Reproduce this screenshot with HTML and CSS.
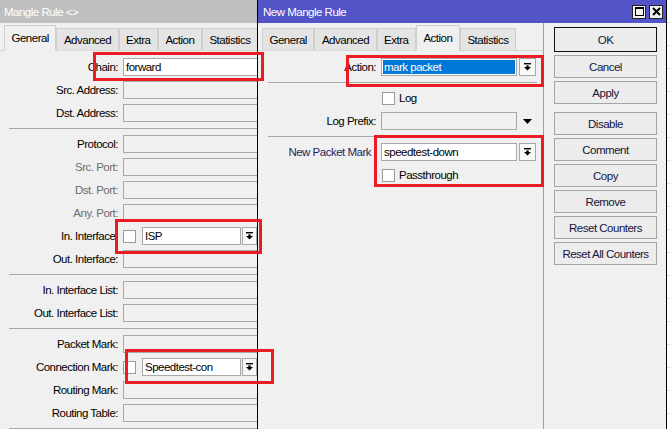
FILE: index.html
```html
<!DOCTYPE html>
<html>
<head>
<meta charset="utf-8">
<title>Mangle Rule</title>
<link rel="stylesheet" href="styles.css">
</head>
<body>
<div class="desktop">

  <section class="win win-back">
    <header class="titlebar inactive"><span class="title-text">Mangle Rule &lt;&gt;</span></header>
    <nav class="tabs">
      <span class="tab active">General</span>
      <span class="tab">Advanced</span>
      <span class="tab">Extra</span>
      <span class="tab">Action</span>
      <span class="tab">Statistics</span>
    </nav>
    <div class="panel">
      <div class="form form-back">
        <span class="lbl">Chain:</span><div class="input white">forward</div>
        <span class="lbl">Src. Address:</span><div class="input"></div>
        <span class="lbl">Dst. Address:</span><div class="input"></div>
        <div class="sep"></div>
        <span class="lbl">Protocol:</span><div class="input"></div>
        <span class="lbl dim">Src. Port:</span><div class="input"></div>
        <span class="lbl dim">Dst. Port:</span><div class="input"></div>
        <span class="lbl dim">Any. Port:</span><div class="input"></div>
        <span class="lbl">In. Interface:</span>
        <div class="combo">
          <span class="chk"></span>
          <div class="input white narrow">ISP</div>
          <span class="dd"><svg width="7" height="8" viewBox="0 0 7 8"><rect x="0" y="0" width="7" height="1.4"/><rect x="2.3" y="2.4" width="2.4" height="1.6"/><path d="M0 4h7L3.5 7.6z"/></svg></span>
        </div>
        <span class="lbl">Out. Interface:</span><div class="input"></div>
        <div class="sep"></div>
        <span class="lbl">In. Interface List:</span><div class="input"></div>
        <span class="lbl">Out. Interface List:</span><div class="input"></div>
        <div class="sep"></div>
        <span class="lbl">Packet Mark:</span><div class="input"></div>
        <span class="lbl">Connection Mark:</span>
        <div class="combo">
          <span class="chk"></span>
          <div class="input white narrow">Speedtest-con</div>
          <span class="dd"><svg width="7" height="8" viewBox="0 0 7 8"><rect x="0" y="0" width="7" height="1.4"/><rect x="2.3" y="2.4" width="2.4" height="1.6"/><path d="M0 4h7L3.5 7.6z"/></svg></span>
        </div>
        <span class="lbl">Routing Mark:</span><div class="input"></div>
        <span class="lbl">Routing Table:</span><div class="input"></div>
        <div class="sep"></div>
      </div>
    </div>
  </section>

  <section class="win win-front">
    <header class="titlebar active">
      <span class="title-text">New Mangle Rule</span>
      <span class="tbtn"><svg width="9" height="9" viewBox="0 0 9 9"><rect x="0.5" y="0.5" width="8" height="8" fill="none" stroke="#000"/><rect x="0" y="0" width="9" height="2"/></svg></span>
      <span class="tbtn"><svg width="9" height="9" viewBox="0 0 9 9"><path d="M1 1L8 8M8 1L1 8" stroke="#000" stroke-width="2"/></svg></span>
    </header>
    <div class="body">
      <div class="main">
        <nav class="tabs">
          <span class="tab">General</span>
          <span class="tab">Advanced</span>
          <span class="tab">Extra</span>
          <span class="tab active">Action</span>
          <span class="tab">Statistics</span>
        </nav>
        <div class="panel">
          <div class="form form-front">
            <span class="lbl">Action:</span>
            <div class="combo">
              <div class="input white sel wide">mark packet</div>
              <span class="dd dd-r"><svg width="7" height="8" viewBox="0 0 7 8"><rect x="0" y="0" width="7" height="1.4"/><rect x="2.3" y="2.4" width="2.4" height="1.6"/><path d="M0 4h7L3.5 7.6z"/></svg></span>
            </div>
            <div class="sep"></div>
            <span class="lbl"></span>
            <div class="check-row"><span class="chk"></span><span>Log</span></div>
            <span class="lbl">Log Prefix:</span>
            <div class="combo">
              <div class="input wide"></div>
              <span class="tri"><svg width="9" height="5" viewBox="0 0 9 5"><path d="M0 0h9L4.5 5z"/></svg></span>
            </div>
            <div class="sep"></div>
            <span class="lbl navy">New Packet Mark</span>
            <div class="combo">
              <div class="input white wide">speedtest-down</div>
              <span class="dd dd-r"><svg width="7" height="8" viewBox="0 0 7 8"><rect x="0" y="0" width="7" height="1.4"/><rect x="2.3" y="2.4" width="2.4" height="1.6"/><path d="M0 4h7L3.5 7.6z"/></svg></span>
            </div>
            <span class="lbl"></span>
            <div class="check-row"><span class="chk"></span><span>Passthrough</span></div>
          </div>
        </div>
      </div>
      <aside class="side">
        <button class="btn default">OK</button>
        <button class="btn">Cancel</button>
        <button class="btn">Apply</button>
        <button class="btn spaced">Disable</button>
        <button class="btn">Comment</button>
        <button class="btn">Copy</button>
        <button class="btn">Remove</button>
        <button class="btn">Reset Counters</button>
        <button class="btn">Reset All Counters</button>
      </aside>
    </div>
  </section>

  <div class="mark mark-chain"></div>
  <div class="mark mark-inif"></div>
  <div class="mark mark-conn"></div>
  <div class="mark mark-action"></div>
  <div class="mark mark-npm"></div>
</div>
</body>
</html>
```

FILE: styles.css
```css
* { box-sizing: border-box; }

html, body {
  margin: 0;
  padding: 0;
}

body {
  width: 671px;
  height: 429px;
  overflow: hidden;
  background: #fff repeating-linear-gradient(to bottom, transparent 0 22px, #e2e2e2 22px 23px);
  font-family: "Liberation Sans", Arial, sans-serif;
  font-size: 11.5px;
  letter-spacing: -0.5px;
  color: #000;
}

.desktop {
  position: relative;
  width: 671px;
  height: 429px;
}

.win {
  position: absolute;
  top: 0;
  display: flex;
  flex-direction: column;
  background: #f0f0f0;
}

.win-back {
  left: 0;
  width: 300px;
  height: 440px;
  z-index: 1;
}

.win-front {
  left: 257px;
  width: 410px;
  height: 440px;
  z-index: 2;
  border-left: 1px solid #000;
  border-right: 1px solid #000;
}

.titlebar {
  flex: none;
  height: 23px;
  display: flex;
  align-items: center;
  color: #fff;
  white-space: nowrap;
}

.titlebar.inactive {
  background: #bfbfbf;
  padding-left: 4px;
}

.titlebar.active {
  background: #5454c9;
  padding: 0 3px 0 5px;
}

.title-text {
  flex: 1;
}

.tbtn {
  width: 14px;
  height: 14px;
  margin-left: 3px;
  border: 1px solid #222;
  background: #f2f2f2;
  display: flex;
  align-items: center;
  justify-content: center;
}

.tbtn svg { display: block; }

.body {
  flex: 1;
  display: flex;
}

.main {
  width: 285px;
  flex: none;
  display: flex;
  flex-direction: column;
}

.tabs {
  height: 27px;
  flex: none;
  display: flex;
  align-items: flex-end;
  padding-left: 4px;
}

.tab {
  height: 22px;
  padding: 0 6.5px;
  border: 1px solid #cfcfcf;
  border-bottom: none;
  background: #e4e4e4;
  display: flex;
  align-items: center;
  white-space: nowrap;
}

.tab.active {
  height: 26px;
  margin-bottom: -1px;
  background: #f0f0f0;
  position: relative;
  z-index: 1;
  padding-bottom: 2px;
}

.panel {
  flex: 1;
  border-top: 1px solid #d7d7d7;
}

.form {
  display: grid;
  grid-template-columns: 118px 1fr;
  column-gap: 5px;
  row-gap: 5px;
  align-items: center;
  padding-top: 7px;
}

.lbl {
  height: 18px;
  line-height: 18px;
  text-align: right;
  white-space: nowrap;
}

.lbl.dim { color: #6d6d6d; }
.lbl.navy { color: #1f1f5c; padding-right: 5px; }

.input {
  height: 18px;
  border: 1px solid #a8a8a8;
  background: #f0f0f0;
  line-height: 16px;
  padding-left: 2px;
  white-space: nowrap;
  overflow: hidden;
}

.input.white { background: #fff; }

.input.sel {
  background: #0078d7;
  color: #fff;
  box-shadow: inset 0 0 0 1px #fff;
}

.input.narrow {
  width: 99px;
  flex: none;
  margin-right: 1px;
}

.input.wide {
  width: 136px;
  flex: none;
}

.combo {
  height: 18px;
  display: flex;
  align-items: center;
}

.chk {
  width: 13px;
  height: 13px;
  flex: none;
  border: 1px solid #9a9a9a;
  background: #fff;
}

.combo .chk { margin-right: 6px; }

.dd {
  width: 15px;
  height: 18px;
  flex: none;
  border: 1px solid #a8a8a8;
  background: #f8f8f8;
  display: flex;
  align-items: center;
  justify-content: center;
}

.dd-r {
  width: 17px;
  margin-left: 2px;
}

.dd svg, .tri svg { display: block; }

.tri {
  margin-left: 6px;
  display: flex;
  align-items: center;
}

.check-row {
  height: 18px;
  display: flex;
  align-items: center;
  gap: 4px;
  padding-left: 1px;
}

.sep {
  grid-column: 1 / -1;
  height: 1px;
  background: #a9a9a9;
  margin: 1px 0 1px 9px;
}

.form-front .sep {
  margin: 1px 6px 1px 10px;
}

.side {
  flex: 1;
  border-left: 1px solid #a0a0a0;
  padding: 4px 0 0 10px;
  display: flex;
  flex-direction: column;
  gap: 3px;
}

.btn {
  width: 103px;
  height: 23px;
  flex: none;
  border: 1px solid #a5a5a5;
  background: #ececec;
  font: inherit;
  letter-spacing: inherit;
  color: #14143c;
  padding: 0;
  text-align: center;
}

.btn.default {
  height: 25px;
  border-color: #111;
}

.btn.spaced { margin-top: 5px; }

.mark {
  position: absolute;
  z-index: 5;
  border: 3px solid #ec1c24;
}

.mark-chain  { left: 93px;  top: 52px;  width: 171px; height: 29px; }
.mark-inif   { left: 115px; top: 219px; width: 147px; height: 35px; }
.mark-conn   { left: 125px; top: 349px; width: 149px; height: 35px; }
.mark-action { left: 346px; top: 55px;  width: 198px; height: 32px; }
.mark-npm    { left: 374px; top: 135px; width: 170px; height: 52px; }
```
